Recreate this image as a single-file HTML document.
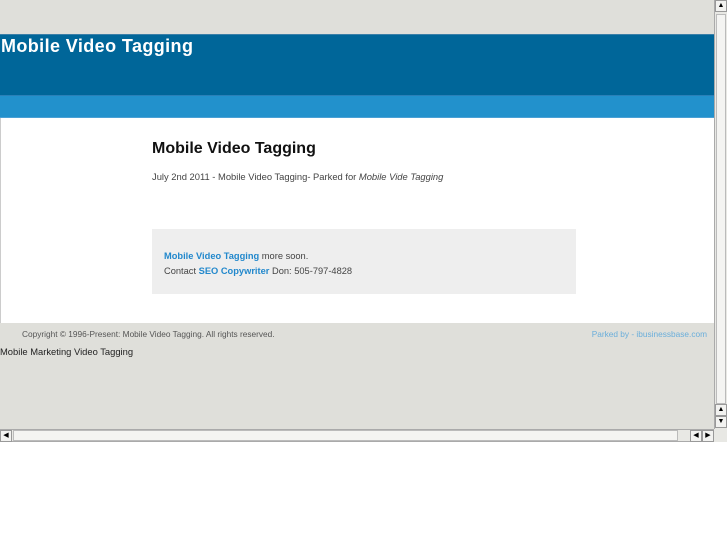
<!DOCTYPE html>
<html><head><meta charset="utf-8"><style>
*{margin:0;padding:0;box-sizing:border-box}
body{width:727px;height:545px;background:#fff;font-family:"Liberation Sans",sans-serif;position:relative;overflow:hidden}
.view{position:absolute;left:0;top:0;width:714px;height:429px;background:#dfdfda;overflow:hidden}
.dark{position:absolute;left:0;top:34px;width:714px;height:61px;background:#006699;border-top:1px solid #3a7fa8}
.dark h1{color:#fff;font-size:18px;font-weight:bold;position:absolute;left:1px;top:1px;letter-spacing:0.4px}
.light{position:absolute;left:0;top:95px;width:714px;height:23px;background:#2291cc;border-top:1px solid #2a80b8;border-bottom:1px solid #4aa0d5}
.white{position:absolute;left:0;top:118px;width:714px;height:205px;background:#fff;border-left:1px solid #ccc}
h2{position:absolute;left:152px;top:140px;font-size:16px;font-weight:bold;color:#111}
.date{position:absolute;left:152px;top:171px;font-size:9.4px;color:#444}
.box{position:absolute;left:152px;top:229px;width:424px;height:65px;background:#eeeeee;padding:20px 0 0 12px;font-size:9.3px;color:#444;line-height:15px}
.box b{color:#2288cc}
.copy{position:absolute;left:22px;top:329px;font-size:8.3px;color:#555}
.park{position:absolute;right:7px;top:329px;font-size:8.3px;color:#6aaedb}
.mm{position:absolute;left:0;top:346px;font-size:9.4px;color:#222}
.vs{position:absolute;left:714px;top:0;width:13px;height:429px;background:#e8e8e4;border-left:1px solid #aaa}
.hs{position:absolute;left:0;top:429px;width:714px;height:13px;background:#e8e8e4;border-top:1px solid #aaa;border-bottom:1px solid #aaa}
.btn{position:absolute;width:12px;height:12px;background:#f2f2f0;border:1px solid #999;font-size:7px;line-height:10px;text-align:center;color:#000}
.corner{position:absolute;left:714px;top:429px;width:13px;height:13px;background:#e8e8e4}
</style></head><body>
<div class="view">
<div class="dark"><h1>Mobile Video Tagging</h1></div>
<div class="light"></div>
<div class="white"></div>
<h2>Mobile Video Tagging</h2>
<div class="date">July 2nd 2011 - Mobile Video Tagging- Parked for <i>Mobile Vide Tagging</i></div>
<div class="box"><b>Mobile Video Tagging</b> more soon.<br>Contact <b>SEO Copywriter</b> Don: 505-797-4828</div>
<div class="copy">Copyright © 1996-Present: Mobile Video Tagging. All rights reserved.</div>
<div class="park">Parked by - ibusinessbase.com</div>
<div class="mm">Mobile Marketing Video Tagging</div>
</div>
<div class="vs">
<div class="btn" style="left:0;top:0">▲</div>
<div style="position:absolute;left:1px;top:14px;width:10px;height:390px;background:#f4f4f2;border:1px solid #bbb"></div>
<div class="btn" style="left:0;top:404px">▲</div>
<div class="btn" style="left:0;top:416px">▼</div>
</div>
<div class="hs">
<div class="btn" style="left:0;top:0">◀</div>
<div style="position:absolute;left:13px;top:0;width:665px;height:11px;background:#f4f4f2;border:1px solid #bbb"></div>
<div class="btn" style="left:690px;top:0">◀</div>
<div class="btn" style="left:702px;top:0">▶</div>
</div>
<div class="corner"></div>
</body></html>
